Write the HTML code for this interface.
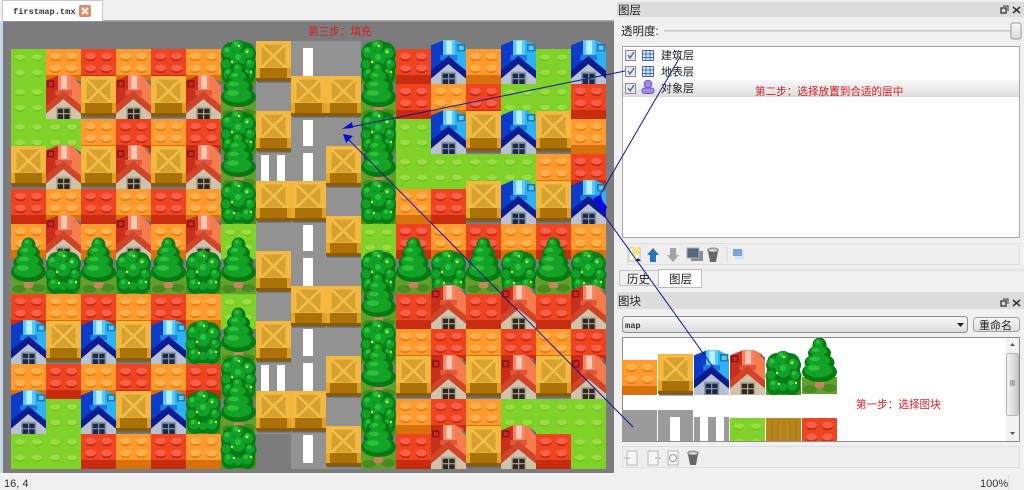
<!DOCTYPE html>
<html><head><meta charset="utf-8"><title>firstmap.tmx</title>
<style>
html,body{margin:0;padding:0;background:#f0f0f0;width:1024px;height:490px;overflow:hidden}
svg{display:block;filter:blur(.35px)}
text{font-family:"Liberation Sans","Noto Sans CJK SC",sans-serif;font-size:11px;fill:#222}
.r{fill:#d81c24;font-size:10.6px}
.m{font-family:"Liberation Mono","Noto Sans CJK SC",monospace;font-size:9px}
</style></head><body>
<svg width="1024" height="490" viewBox="0 0 1024 490" xmlns="http://www.w3.org/2000/svg">
<defs>
<g id="O"><rect width="35" height="35" fill="#ff9a2e"/><rect y="26" width="35" height="9" fill="#d8700c"/>
<ellipse cx="9.500" cy="8.500" rx="5.500" ry="3.800" fill="#e2800f"/><ellipse cx="9.500" cy="7" rx="5.500" ry="3.300" fill="#ffb04e"/>
<ellipse cx="25.500" cy="8.500" rx="5.500" ry="3.800" fill="#e2800f"/><ellipse cx="25.500" cy="7" rx="5.500" ry="3.300" fill="#ffb04e"/>
<ellipse cx="9.500" cy="20.500" rx="5.500" ry="3.800" fill="#e2800f"/><ellipse cx="9.500" cy="19" rx="5.500" ry="3.300" fill="#ffb04e"/>
<ellipse cx="25.500" cy="20.500" rx="5.500" ry="3.800" fill="#e2800f"/><ellipse cx="25.500" cy="19" rx="5.500" ry="3.300" fill="#ffb04e"/></g>
<g id="R"><rect width="35" height="35" fill="#ee4420"/><rect y="26" width="35" height="9" fill="#c82c10"/>
<ellipse cx="9.500" cy="8.500" rx="5.500" ry="3.800" fill="#c42a14"/><ellipse cx="9.500" cy="7" rx="5.500" ry="3.300" fill="#f8604a"/>
<ellipse cx="25.500" cy="8.500" rx="5.500" ry="3.800" fill="#c42a14"/><ellipse cx="25.500" cy="7" rx="5.500" ry="3.300" fill="#f8604a"/>
<ellipse cx="9.500" cy="20.500" rx="5.500" ry="3.800" fill="#c42a14"/><ellipse cx="9.500" cy="19" rx="5.500" ry="3.300" fill="#f8604a"/>
<ellipse cx="25.500" cy="20.500" rx="5.500" ry="3.800" fill="#c42a14"/><ellipse cx="25.500" cy="19" rx="5.500" ry="3.300" fill="#f8604a"/></g>
<g id="G"><rect width="35" height="35" fill="#80d22a"/>
<ellipse cx="9" cy="9" rx="5" ry="3.200" fill="#6cc020"/><ellipse cx="9" cy="8" rx="5" ry="2.800" fill="#9ade44"/>
<ellipse cx="26" cy="9" rx="5" ry="3.200" fill="#6cc020"/><ellipse cx="26" cy="8" rx="5" ry="2.800" fill="#9ade44"/>
<ellipse cx="9" cy="24.500" rx="5" ry="3.200" fill="#6cc020"/><ellipse cx="9" cy="23.500" rx="5" ry="2.800" fill="#9ade44"/>
<ellipse cx="26" cy="24.500" rx="5" ry="3.200" fill="#6cc020"/><ellipse cx="26" cy="23.500" rx="5" ry="2.800" fill="#9ade44"/></g>
<g id="C"><rect y="32" x="1" width="34" height="1.500" fill="#666"/><rect y="-8" width="35" height="40" fill="#f4b83e"/>
<rect x="5" y="-5" width="25" height="24" fill="#d8a02e"/>
<path d="M6-4 29 18M29-4 6 18" stroke="#f2c04a" stroke-width="2.500"/>
<rect x="5" y="-5" width="25" height="24" fill="none" stroke="#f4c050" stroke-width="1"/>
<rect y="19" width="35" height="13" fill="#ab720a"/><rect y="19" width="4" height="13" fill="#e6a828"/><rect x="31" y="19" width="4" height="13" fill="#e0a024"/><rect y="29" width="35" height="3" fill="#8c5c04"/></g>
<g id="H"><g transform="translate(0,-9) scale(.3333)">
<polygon points="0,16 30,4 42,0 55,0 55,62 0,100" fill="#c8301c"/>
<polygon points="55,0 72,0 96,12 105,30 105,100 55,62" fill="#f57c4c"/>
<polygon points="84,8 105,22 105,32" fill="#5a6c90"/>
<rect x="36" y="0" width="36" height="45" fill="#f2866a"/><rect x="46" y="2" width="17" height="40" fill="#ffc8b0"/>
<rect x="28" y="45" width="50" height="16" fill="#e4563a"/>
<rect x="3" y="16" width="22" height="21" fill="#8a1414"/><rect x="8" y="21" width="13" height="12" fill="#d02820"/>
<polygon points="52,72 105,116 105,135 0,135 0,116" fill="#cfc3ab"/>
<polygon points="52,48 105,92 105,116 52,72 0,116 0,92" fill="#d0452a"/>
<rect x="30" y="95" width="46" height="40" fill="#b5a98f"/><rect x="35" y="101" width="36" height="31" fill="#2e2820"/>
<path d="M53 101V132M35 116H71" stroke="#b5a98f" stroke-width="3.500"/></g></g>
<g id="B"><g transform="translate(0,-9) scale(.3333)">
<polygon points="0,16 30,4 42,0 55,0 55,62 0,100" fill="#0c3cc8"/>
<polygon points="55,0 72,0 96,12 105,30 105,100 55,62" fill="#2cb2f2"/>
<rect x="78" y="12" width="25" height="22" fill="#1a7ab4"/><rect x="83" y="17" width="15" height="13" fill="#5cc8ef"/>
<rect x="36" y="0" width="36" height="45" fill="#58c8f8"/><rect x="46" y="2" width="17" height="40" fill="#b8f0ff"/>
<rect x="28" y="45" width="50" height="16" fill="#2078e4"/>
<polygon points="52,72 105,116 105,135 0,135 0,116" fill="#b8c2d2"/>
<polygon points="52,48 105,92 105,116 52,72 0,116 0,92" fill="#0c1c90"/>
<rect x="30" y="95" width="46" height="40" fill="#8a98ac"/><rect x="35" y="101" width="36" height="31" fill="#1c2848"/>
<path d="M53 101V132M35 116H71" stroke="#8a98ac" stroke-width="3.500"/></g></g>
<g id="S"><rect y="18" width="35" height="17" fill="#4f8f24"/>
<rect x="1" y="-7" width="33" height="41" rx="10" fill="#067c14"/>
<g fill="#067c14"><circle cx="17.500" cy="-1" r="8"/><circle cx="8" cy="5" r="8"/><circle cx="27" cy="5" r="8"/><circle cx="6" cy="16" r="6.500"/><circle cx="29" cy="16" r="6.500"/><circle cx="9" cy="27" r="8"/><circle cx="26" cy="27" r="8"/></g>
<g fill="#11a02a"><circle cx="16" cy="-3" r="6"/><circle cx="7" cy="3" r="5.500"/><circle cx="27" cy="4" r="5.500"/><circle cx="5" cy="15" r="4.500"/><circle cx="29" cy="15" r="4.500"/><circle cx="17" cy="10" r="7.500"/><circle cx="8" cy="25" r="5.500"/><circle cx="26" cy="25" r="5.500"/><circle cx="17" cy="27" r="4"/></g>
<g fill="#2cc238"><circle cx="15" cy="-5" r="2.500"/><circle cx="6" cy="1" r="2.500"/><circle cx="26" cy="2" r="2.500"/><circle cx="17" cy="8" r="3"/><circle cx="7" cy="23" r="2.200"/><circle cx="25" cy="23" r="2.200"/><circle cx="28" cy="13" r="2"/></g>
<g fill="#dce84a"><circle cx="11" cy="13" r="1.200"/><circle cx="26" cy="3" r="1.200"/><circle cx="13" cy="24" r="1.200"/><circle cx="30" cy="23" r="1.200"/><circle cx="18" cy="-3" r="1.200"/></g></g>
<g id="T"><rect y="18" width="35" height="17" fill="#62a02c"/><ellipse cx="8" cy="30" rx="7" ry="4" fill="#4a8a22"/><ellipse cx="27" cy="29" rx="7" ry="4" fill="#4a8a22"/>
<rect x="13" y="21" width="9" height="8" rx="2" fill="#c6845a"/>
<g fill="#067a12"><ellipse cx="17.500" cy="13" rx="17.500" ry="10"/><ellipse cx="17.500" cy="3.500" rx="15" ry="9"/><ellipse cx="17.500" cy="-6" rx="11.500" ry="8"/><ellipse cx="17.500" cy="-14" rx="7" ry="7.500"/></g>
<g fill="#14a226"><ellipse cx="16.500" cy="11" rx="14" ry="7.500"/><ellipse cx="16.500" cy="1.500" rx="11.500" ry="6"/><ellipse cx="16.500" cy="-8" rx="8.500" ry="5"/><ellipse cx="16.500" cy="-15.500" rx="4.500" ry="4.800"/></g>
<g fill="#2cc03c"><ellipse cx="12" cy="9" rx="6" ry="2.800"/><ellipse cx="13" cy="0" rx="5" ry="2.200"/><ellipse cx="14" cy="-9" rx="3.500" ry="2"/><ellipse cx="16" cy="-17" rx="1.800" ry="2"/></g></g>
<clipPath id="ts"><rect x="622" y="338" width="384" height="103"/></clipPath>
<linearGradient id="gr" x1="0" y1="0" x2="0" y2="1"><stop offset="0" stop-color="#f8f8f8"/><stop offset="1" stop-color="#dcdcdc"/></linearGradient>
<linearGradient id="gs" x1="0" y1="0" x2="1" y2="0"><stop offset="0" stop-color="#f6f6f6"/><stop offset="1" stop-color="#c8c8c8"/></linearGradient>
</defs>

<rect width="1024" height="490" fill="#f0f0f0"/>
<!-- canvas -->
<rect x="0" y="21" width="3" height="452" fill="#c8d8ea"/>
<rect x="3" y="21" width="611" height="452" fill="#7c7c7c"/>
<rect x="3" y="20" width="611" height="1.500" fill="#a8a8a8"/>
<!-- tab -->
<rect x="3" y="0" width="99" height="21" fill="#fff"/>
<path d="M2.500 21V.5H102.500V21" fill="none" stroke="#c8c8c8"/>
<text class="m" x="13" y="14" style="font-size:8.700px;font-weight:bold;fill:#333">firstmap.tmx</text>
<rect x="79" y="5" width="12" height="12" rx="2" fill="#e08a68"/>
<path d="M82 8 88 14M88 8 82 14" stroke="#fff" stroke-width="2"/>
<!-- road -->
<rect x="256" y="41" width="105" height="393" fill="#929292"/>
<rect x="291" y="434" width="70" height="35" fill="#929292"/>
<g fill="#fff">
<rect x="303" y="48" width="10" height="29"/><rect x="303" y="120" width="10" height="26"/><rect x="303" y="153" width="10" height="28"/>
<rect x="303" y="225" width="10" height="26"/><rect x="303" y="258" width="10" height="28"/><rect x="303" y="329" width="10" height="27"/>
<rect x="303" y="363" width="10" height="28"/><rect x="303" y="435" width="10" height="28"/>
<rect x="261" y="155" width="8" height="26"/><rect x="277" y="155" width="8" height="26"/>
<rect x="261" y="365" width="8" height="26"/><rect x="277" y="365" width="8" height="26"/>
</g>
<!-- map rows -->
<g transform="translate(0,49)"><use href="#G" x="11"/><use href="#O" x="46"/><use href="#R" x="81"/><use href="#O" x="116"/><use href="#R" x="151"/><use href="#O" x="186"/><use href="#S" x="221"/><use href="#C" x="256"/><use href="#S" x="361"/><use href="#R" x="396"/><use href="#B" x="431"/><use href="#O" x="466"/><use href="#B" x="501"/><use href="#G" x="536"/><use href="#B" x="571"/></g>
<g transform="translate(0,84)"><use href="#G" x="11"/><use href="#H" x="46"/><use href="#C" x="81"/><use href="#H" x="116"/><use href="#C" x="151"/><use href="#H" x="186"/><use href="#T" x="221"/><use href="#C" x="291"/><use href="#C" x="326"/><use href="#T" x="361"/><use href="#R" x="396"/><use href="#O" x="431"/><use href="#R" x="466"/><use href="#G" x="501"/><use href="#G" x="536"/><use href="#R" x="571"/></g>
<g transform="translate(0,119)"><use href="#G" x="11"/><use href="#G" x="46"/><use href="#O" x="81"/><use href="#R" x="116"/><use href="#O" x="151"/><use href="#R" x="186"/><use href="#S" x="221"/><use href="#C" x="256"/><use href="#S" x="361"/><use href="#G" x="396"/><use href="#B" x="431"/><use href="#C" x="466"/><use href="#B" x="501"/><use href="#C" x="536"/><use href="#O" x="571"/></g>
<g transform="translate(0,154)"><use href="#C" x="11"/><use href="#H" x="46"/><use href="#C" x="81"/><use href="#H" x="116"/><use href="#C" x="151"/><use href="#H" x="186"/><use href="#T" x="221"/><use href="#C" x="326"/><use href="#T" x="361"/><use href="#G" x="396"/><use href="#G" x="431"/><use href="#G" x="466"/><use href="#G" x="501"/><use href="#O" x="536"/><use href="#R" x="571"/></g>
<g transform="translate(0,189)"><use href="#R" x="11"/><use href="#O" x="46"/><use href="#R" x="81"/><use href="#O" x="116"/><use href="#R" x="151"/><use href="#O" x="186"/><use href="#S" x="221"/><use href="#C" x="256"/><use href="#C" x="291"/><use href="#S" x="361"/><use href="#O" x="396"/><use href="#R" x="431"/><use href="#C" x="466"/><use href="#B" x="501"/><use href="#C" x="536"/><use href="#B" x="571"/></g>
<g transform="translate(0,224)"><use href="#O" x="11"/><use href="#H" x="46"/><use href="#O" x="81"/><use href="#H" x="116"/><use href="#O" x="151"/><use href="#H" x="186"/><use href="#G" x="221"/><use href="#C" x="326"/><use href="#G" x="361"/><use href="#R" x="396"/><use href="#O" x="431"/><use href="#R" x="466"/><use href="#O" x="501"/><use href="#R" x="536"/><use href="#O" x="571"/></g>
<g transform="translate(0,259)"><use href="#T" x="11"/><use href="#S" x="46"/><use href="#T" x="81"/><use href="#S" x="116"/><use href="#T" x="151"/><use href="#S" x="186"/><use href="#T" x="221"/><use href="#C" x="256"/><use href="#S" x="361"/><use href="#T" x="396"/><use href="#S" x="431"/><use href="#T" x="466"/><use href="#S" x="501"/><use href="#T" x="536"/><use href="#S" x="571"/></g>
<g transform="translate(0,294)"><use href="#R" x="11"/><use href="#O" x="46"/><use href="#R" x="81"/><use href="#O" x="116"/><use href="#R" x="151"/><use href="#O" x="186"/><use href="#G" x="221"/><use href="#C" x="291"/><use href="#C" x="326"/><use href="#T" x="361"/><use href="#R" x="396"/><use href="#H" x="431"/><use href="#R" x="466"/><use href="#H" x="501"/><use href="#R" x="536"/><use href="#H" x="571"/></g>
<g transform="translate(0,329)"><use href="#B" x="11"/><use href="#C" x="46"/><use href="#B" x="81"/><use href="#C" x="116"/><use href="#B" x="151"/><use href="#S" x="186"/><use href="#T" x="221"/><use href="#C" x="256"/><use href="#S" x="361"/><use href="#O" x="396"/><use href="#R" x="431"/><use href="#O" x="466"/><use href="#R" x="501"/><use href="#O" x="536"/><use href="#R" x="571"/></g>
<g transform="translate(0,364)"><use href="#O" x="11"/><use href="#R" x="46"/><use href="#O" x="81"/><use href="#R" x="116"/><use href="#O" x="151"/><use href="#R" x="186"/><use href="#S" x="221"/><use href="#C" x="326"/><use href="#T" x="361"/><use href="#C" x="396"/><use href="#H" x="431"/><use href="#C" x="466"/><use href="#H" x="501"/><use href="#C" x="536"/><use href="#H" x="571"/></g>
<g transform="translate(0,399)"><use href="#B" x="11"/><use href="#G" x="46"/><use href="#B" x="81"/><use href="#C" x="116"/><use href="#B" x="151"/><use href="#S" x="186"/><use href="#T" x="221"/><use href="#C" x="256"/><use href="#C" x="291"/><use href="#S" x="361"/><use href="#O" x="396"/><use href="#R" x="431"/><use href="#O" x="466"/><use href="#G" x="501"/><use href="#G" x="536"/><use href="#G" x="571"/></g>
<g transform="translate(0,434)"><use href="#G" x="11"/><use href="#G" x="46"/><use href="#R" x="81"/><use href="#O" x="116"/><use href="#R" x="151"/><use href="#O" x="186"/><use href="#S" x="221"/><use href="#C" x="326"/><use href="#T" x="361"/><use href="#R" x="396"/><use href="#H" x="431"/><use href="#C" x="466"/><use href="#H" x="501"/><use href="#R" x="536"/><use href="#G" x="571"/></g>
<rect x="3" y="469" width="611" height="4" fill="#7c7c7c"/>
<text class="r" x="308" y="35">第三步：填充</text>

<!-- layers panel -->
<rect x="614" y="0" width="410" height="490" fill="#f0f0f0"/>
<rect x="617" y="2" width="407" height="15" fill="#dcdcdc"/>
<text x="618" y="14" style="font-size:11.500px">图层</text>
<g fill="none" stroke="#333"><rect x="1001" y="8" width="5" height="5" stroke-width="1.300"/><path d="M1003 6H1008V11"/><path d="M1013 7 1020 13M1020 7 1013 13" stroke-width="1.500"/></g>
<text x="621" y="35" style="font-size:11.500px">透明度:</text>
<rect x="664" y="30" width="348" height="1.500" fill="#c8c8c8"/>
<rect x="1011" y="23" width="10" height="16" rx="2" fill="url(#gr)" stroke="#999"/>
<rect x="622.500" y="46.500" width="397" height="191" fill="#fff" stroke="#a8a8a8"/>
<rect x="623" y="80" width="396" height="17" fill="url(#gr)"/>
<g fill="#e6e6ee" stroke="#8a8a9c"><rect x="625.500" y="50.500" width="10" height="10"/><rect x="625.500" y="66.500" width="10" height="10"/><rect x="625.500" y="83.500" width="10" height="10"/></g>
<g fill="none" stroke="#54607c" stroke-width="1.300"><path d="M628 55 630 58 634 52M628 71 630 74 634 68M628 88 630 91 634 85"/></g>
<g fill="#dce6f6" stroke="#4a70b4"><rect x="642.500" y="50.500" width="11" height="10"/><rect x="642.500" y="66.500" width="11" height="10"/><path d="M646 50.500V60.500M650 50.500V60.500M642.500 54H653.500M642.500 57.500H653.500M646 66.500V76.500M650 66.500V76.500M642.500 70H653.500M642.500 73.500H653.500" fill="none"/></g>
<g fill="#a08ae6" stroke="#6f58c4"><circle cx="648" cy="84" r="3.800"/><rect x="642" y="88" width="12" height="5.500" rx="2.500"/></g>
<text x="661" y="59">建筑层</text><text x="661" y="75.500">地表层</text><text x="661" y="92">对象层</text>
<text class="r" x="755" y="95">第二步：选择放置到合适的层中</text>
<!-- layer toolbar -->
<rect x="627.500" y="243.500" width="392" height="21" fill="#eee" stroke="#dedede"/>
<rect x="629" y="248" width="11" height="13" fill="#fdfdf4" stroke="#bbb"/><circle cx="636" cy="251" r="4" fill="#f5e67a"/>
<path d="M638 258l-3 3h6z" fill="#222"/>
<path d="M653 248 659 255H656V262H650V255H647Z" fill="#2a72b8"/>
<path d="M673 262 679 255H676V248H670V255H667Z" fill="#a4a4a4"/>
<rect x="691" y="251" width="12" height="10" fill="#8c8c94"/><rect x="687" y="248" width="12" height="10" fill="#586878" stroke="#aab"/>
<ellipse cx="713" cy="250" rx="6" ry="2.500" fill="#999"/><path d="M708 251H718L716 262H710Z" fill="#666"/><ellipse cx="713" cy="250.500" rx="4" ry="1.300" fill="#ddd"/>
<rect x="726.500" y="247" width="1" height="14" fill="#d8d8d8"/>
<rect x="735" y="250" width="9" height="9" fill="#d8e4f4"/><rect x="733" y="249" width="9" height="7" fill="#7ca4dc"/>
<!-- tabs -->
<path d="M700 270H1024" stroke="#dcdcdc"/>
<rect x="619.500" y="270.500" width="39" height="15" fill="#f0f0f0" stroke="#c4c4c4"/>
<rect x="658.500" y="269.500" width="43" height="18" fill="#fff" stroke="#bcbcbc"/>
<text x="627" y="283" style="font-size:11.500px">历史</text><text x="669" y="283" style="font-size:11.500px">图层</text>
<!-- tileset panel -->
<rect x="617" y="292" width="407" height="17" fill="#dcdcdc"/>
<text x="618" y="305" style="font-size:11.500px">图块</text>
<g fill="none" stroke="#333"><rect x="1001" y="301" width="5" height="5" stroke-width="1.300"/><path d="M1003 299H1008V304"/><path d="M1013 300 1020 306M1020 300 1013 306" stroke-width="1.500"/></g>
<rect x="622.500" y="316.500" width="345" height="16" rx="3" fill="url(#gr)" stroke="#8c8c8c"/>
<text class="m" x="625" y="328" style="font-size:8.700px;font-weight:bold;fill:#333">map</text>
<path d="M957 323H964L960.500 327Z" fill="#222"/>
<rect x="973.500" y="317.500" width="46" height="14" rx="3" fill="url(#gr)" stroke="#a0a0a0"/>
<text x="979" y="329" style="font-size:11px">重命名</text>
<rect x="622.500" y="337.500" width="397" height="104" fill="#fff" stroke="#8c8c8c"/>
<g clip-path="url(#ts)">
<use href="#O" x="622" y="360"/><use href="#C" x="658" y="362"/><use href="#B" x="694" y="359"/><use href="#H" x="730" y="359"/><use href="#S" x="766" y="360"/><use href="#T" x="802" y="359"/>
<rect x="622" y="410" width="35" height="31" fill="#9a9a9a"/>
<rect x="658" y="410" width="35" height="31" fill="#9a9a9a"/><rect x="670" y="417" width="10" height="24" fill="#fff"/>
<rect x="694" y="417" width="35" height="24" fill="#9a9a9a"/><rect x="700" y="417" width="8" height="24" fill="#fff"/><rect x="716" y="417" width="8" height="24" fill="#fff"/>
<use href="#G" x="730" y="418"/>
<rect x="766" y="418" width="35" height="23" fill="#b8861e"/><path d="M772 418V441M778 418V441M784 418V441M790 418V441M796 418V441" stroke="#a87616"/>
<use href="#R" x="802" y="418"/>
</g>
<text class="r" x="856" y="408">第一步：选择图块</text>
<rect x="1006" y="338" width="13" height="103" fill="#f2f2f2"/>
<rect x="1006.500" y="353.500" width="12" height="62" rx="2" fill="url(#gs)" stroke="#b4b4b4"/>
<path d="M1010 381H1015M1010 383H1015M1010 385H1015" stroke="#777"/>
<path d="M1012.500 343 1015 346H1010ZM1012.500 435 1015 432H1010Z" fill="#555"/>
<rect x="622.500" y="446.500" width="397" height="21" fill="#eee" stroke="#dedede"/>
<g fill="#f6f6f6" stroke="#b8b8b8"><rect x="627" y="451" width="10" height="14"/><rect x="648" y="451" width="10" height="14"/><rect x="668" y="451" width="10" height="14"/></g>
<path d="M630 458H624M655 458H661" stroke="#b8c0c8" stroke-width="1.500"/><circle cx="673" cy="458" r="3.500" fill="none" stroke="#999"/>
<ellipse cx="693" cy="453" rx="6" ry="2.500" fill="#999"/><path d="M688 454H698L696 465H690Z" fill="#666"/><ellipse cx="693" cy="453.500" rx="4" ry="1.300" fill="#ddd"/>
<!-- status -->
<text x="4" y="487" style="font-size:11px;fill:#333">16, 4</text>
<rect x="30" y="474" width="1" height="16" fill="#e4e4e4"/>
<text x="980" y="487" style="font-size:11px;fill:#333">100%</text>
<rect x="1008" y="474" width="1" height="16" fill="#dcdcdc"/>
<!-- annotation lines -->
<g stroke="#14149a" stroke-width="1" fill="none">
<path d="M348 127.500 625 71"/><path d="M348 139 633 427"/><path d="M597 200 680 57"/><path d="M597 205 713 367"/>
</g>
<g fill="#0a0ad8">
<polygon points="342,129 352,122 353,128"/><polygon points="343,134 353,136 346,143"/>
<polygon points="593,199 601,194 602,200 607,207 605,213 598,207"/>
</g>
</svg>
</body></html>
